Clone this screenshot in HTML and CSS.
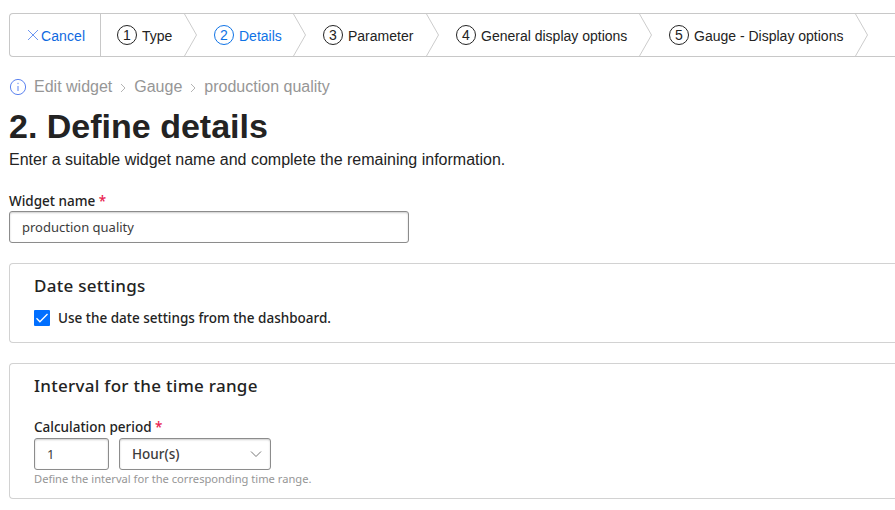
FILE: index.html
```html
<!DOCTYPE html>
<html lang="en">
<head>
<meta charset="utf-8">
<title>Edit widget</title>
<link rel="stylesheet" href="styles.css">
</head>
<body>
<nav class="wizard">
  <a class="cancel"><svg width="12" height="12" viewBox="0 0 12 12"><path d="M1 1l10 10M11 1L1 11"/></svg><span>Cancel</span></a>
  <div class="step s1"><b>1</b><span>Type</span><svg class="sep" viewBox="0 0 13 42"><path d="M.5 0L12.5 21 .5 42"/></svg></div>
  <div class="step s2 active"><b>2</b><span>Details</span><svg class="sep" viewBox="0 0 13 42"><path d="M.5 0L12.5 21 .5 42"/></svg></div>
  <div class="step s3"><b>3</b><span>Parameter</span><svg class="sep" viewBox="0 0 13 42"><path d="M.5 0L12.5 21 .5 42"/></svg></div>
  <div class="step s4"><b>4</b><span>General display options</span><svg class="sep" viewBox="0 0 13 42"><path d="M.5 0L12.5 21 .5 42"/></svg></div>
  <div class="step s5"><b>5</b><span>Gauge - Display options</span><svg class="sep" viewBox="0 0 13 42"><path d="M.5 0L12.5 21 .5 42"/></svg></div>
</nav>
<div class="crumbs">
  <svg class="info" width="18" height="18" viewBox="0 0 18 18"><circle cx="9" cy="9" r="7.6"/><path d="M9 8v5M9 4.8v1.3"/></svg>
  <span class="c1">Edit widget</span>
  <svg class="arrow" width="6" height="10" viewBox="0 0 6 10"><path d="M1 1l4 4-4 4"/></svg>
  <span class="c2">Gauge</span>
  <svg class="arrow" width="6" height="10" viewBox="0 0 6 10"><path d="M1 1l4 4-4 4"/></svg>
  <span class="c3">production quality</span>
</div>
<h1>2. Define details</h1>
<p class="lead">Enter a suitable widget name and complete the remaining information.</p>
<div class="label name-label">Widget name <i>*</i></div>
<div class="field name-field"><span>production quality</span></div>
<section class="card date-card">
  <h2 class="h-date">Date settings</h2>
  <div class="check"><svg width="16" height="16" viewBox="0 0 16 16"><rect width="16" height="16" rx="1"/><path d="M2.5 8.2l3.4 3.6L13.5 4"/></svg><span>Use the date settings from the dashboard.</span></div>
</section>
<section class="card interval-card">
  <h2 class="h-int">Interval for the time range</h2>
  <div class="label calc-label">Calculation period <i>*</i></div>
  <div class="controls">
    <div class="field amount"><span>1</span></div>
    <div class="field unit"><span>Hour(s)</span><svg width="12" height="8" viewBox="0 0 12 8"><path d="M1 1.5l5 5 5-5"/></svg></div>
  </div>
  <div class="hint">Define the interval for the corresponding time range.</div>
</section>
</body>
</html>
```
FILE: styles.css
```css
* { box-sizing: border-box; }
body {
  margin: 0;
  padding: 13px 0 0 9px;
  height: 510px;
  overflow: hidden;
  background: #fff;
  color: #232323;
  font-family: "Noto Sans", sans-serif;
  white-space: nowrap;
}
svg { fill: none; flex: none; display: block; }
.wizard {
  display: flex;
  height: 44px;
  border: 1px solid #c8c8c8;
  border-right: 0;
  border-radius: 4px 0 0 4px;
  font: 14px/42px "Liberation Sans", sans-serif;
}
.cancel {
  display: flex;
  align-items: center;
  width: 91px;
  padding-left: 17px;
  gap: 2px;
  color: #0f69df;
  border-right: 1px solid #c8c8c8;
}
.cancel svg { stroke: #6c96f2; }
.cancel span { padding-top: 2px; }
.cancel span { letter-spacing: 0.1px; }
.step { display: flex; align-items: center; padding-left: 17px; flex: none; }
.step b {
  width: 20px;
  height: 20px;
  margin-right: 5px;
  border: 1px solid currentColor;
  border-radius: 50%;
  font-weight: 400;
  line-height: 19px;
  text-align: center;
}
.step span { padding-top: 2px; }
.sep { width: 13px; height: 42px; margin-left: auto; stroke: #ccc; }
.active { color: #0f73e6; }
.s1 { width: 96px; padding-left: 16px; }
.s2 { width: 109px; }
.s3 { width: 133px; }
.s4 { width: 213px; }
.s5 { width: 216px; }
.crumbs {
  display: flex;
  align-items: center;
  height: 20px;
  margin-top: 20px;
  color: #969696;
  font: 16px/20px "Liberation Sans", sans-serif;
}
.info { margin: 0 7px 0 0; stroke: #5c83f0; }
.arrow { margin: 1px 8px 0; stroke: #b4b4b4; }
h1 {
  margin: 9px 0 0;
  font: bold 34px/40px "Liberation Sans", sans-serif;
}
.lead { margin: 4px 0 0; font: 16px/20px "Liberation Sans", sans-serif; }
.label { font-size: 13.5px; font-weight: 500; line-height: 20px; }
.label i { color: #e8204e; font-style: normal; }
.name-label { margin-top: 21px; }
.field {
  display: flex;
  align-items: center;
  height: 32px;
  padding: 0 12px;
  border: 1px solid #8c8c8c;
  border-radius: 3px;
  box-shadow: inset 0 1px 2px #0003;
  font-size: 13px;
  color: #3c3c3c;
}
.name-field { width: 400px; margin-top: 0; }
.card { border: 1px solid #d2d2d2; border-right: 0; border-radius: 4px 0 0 4px; padding-left: 24px; }
.date-card { height: 80px; margin-top: 20px; }
.interval-card { height: 136px; margin-top: 20px; }
h2 { margin: 10px 0 0; font-size: 17px; font-weight: 500; line-height: 24px; letter-spacing: 0.28px; }
.check { display: flex; align-items: center; height: 20px; margin-top: 10px; gap: 8px; font-size: 13.5px; font-weight: 500; }
.check rect { fill: #006fff; }
.check path { stroke: #fff; stroke-width: 1.3; }
.calc-label { margin-top: 19px; }
.controls { display: flex; gap: 10px; margin-top: 1px; }
.field span { margin-top: -1px; }
.amount { width: 75px; }
.unit { width: 152px; justify-content: space-between; padding-right: 8px; font-size: 13.5px; font-weight: 500; }
.unit svg { stroke: #777; }
.hint { margin-top: 1px; font-size: 11.15px; line-height: 16px; color: #969696; }
```
